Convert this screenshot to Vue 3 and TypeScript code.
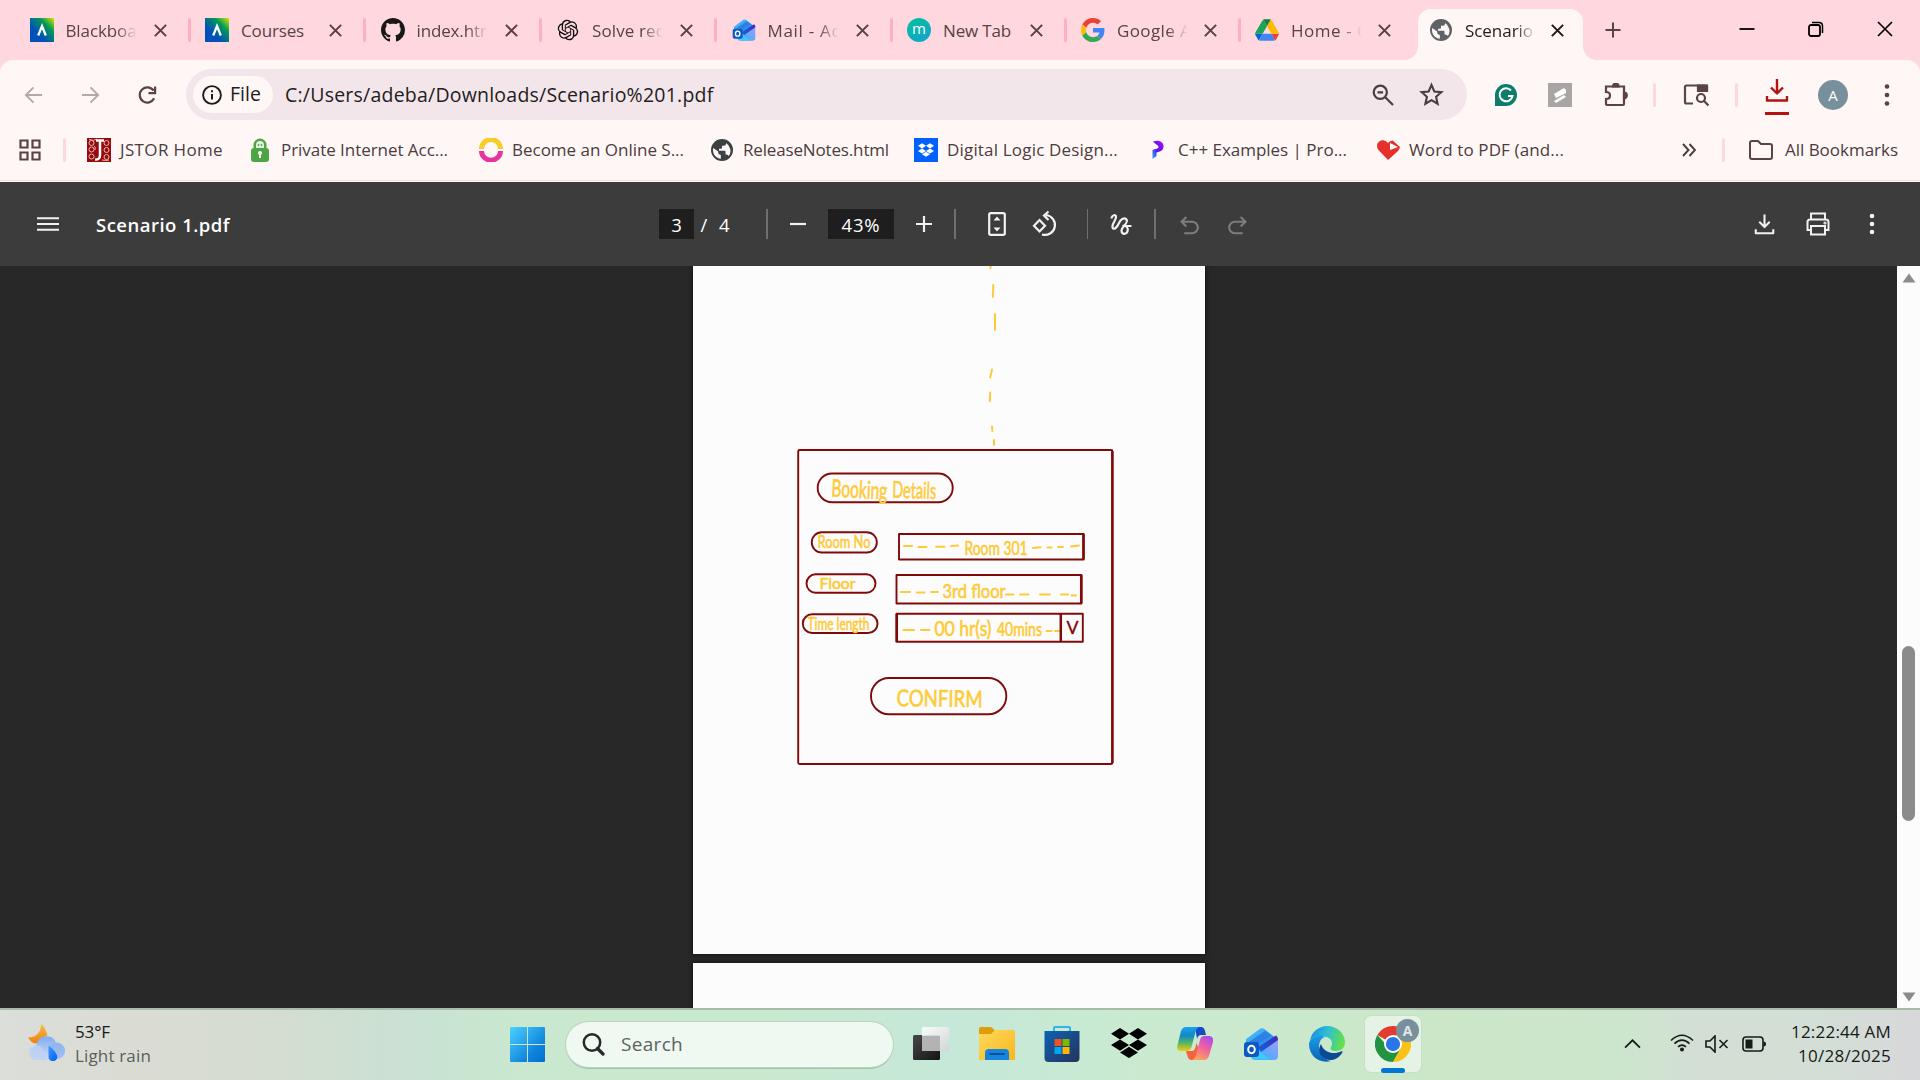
<script setup lang="ts">
import type { Directive } from 'vue'

interface Tab { title: string; icon: string; fit: number; width: number }
interface Bookmark { label: string; icon: string; fit: number; width: number }

// Spreads the letters of an element so that its line takes the given width.
const vFit: Directive<HTMLElement, number> = {
  mounted(el, binding) {
    const natural = el.getBoundingClientRect().width
    const count = (el.textContent ?? '').trim().length
    if (count > 0) el.style.letterSpacing = `${(binding.value - natural) / count}px`
  },
}

const tabs: Tab[] = [
  { title: 'Blackboa', icon: 'anthology', fit: 71, width: 175.5 },
  { title: 'Courses', icon: 'anthology', fit: 63, width: 175.5 },
  { title: 'index.htm', icon: 'github', fit: 79, width: 175.5 },
  { title: 'Solve rec', icon: 'openai', fit: 72, width: 175.5 },
  { title: 'Mail - Ad', icon: 'outlook', fit: 75, width: 175.5 },
  { title: 'New Tab', icon: 'm', fit: 68, width: 174 },
  { title: 'Google A', icon: 'google', fit: 74, width: 174 },
  { title: 'Home - G', icon: 'drive', fit: 79, width: 174.5 },
  { title: 'Scenario 1', icon: 'globe-grey', fit: 82, width: 174 },
]

const bookmarks: Bookmark[] = [
  { label: 'JSTOR Home', icon: 'jstor', fit: 103, width: 161 },
  { label: 'Private Internet Acc...', icon: 'pia', fit: 167, width: 231 },
  { label: 'Become an Online S...', icon: 'ring', fit: 172, width: 231 },
  { label: 'ReleaseNotes.html', icon: 'globe-dark', fit: 146, width: 204 },
  { label: 'Digital Logic Design...', icon: 'dropbox-blue', fit: 171, width: 231 },
  { label: 'C++ Examples | Pro...', icon: 'programiz', fit: 169, width: 231 },
  { label: 'Word to PDF (and...', icon: 'heart', fit: 155, width: 220 },
]

const apps = ['taskview', 'explorer', 'store', 'dropbox', 'copilot', 'outlook', 'edge']
</script>

<template>
  <svg class="sprite" width="0" height="0" aria-hidden="true">
    <defs>
      <linearGradient id="g-anth" x1="0" y1="1" x2="1" y2="0">
        <stop offset="0.35" stop-color="#0052b8" /><stop offset="0.7" stop-color="#009a55" /><stop offset="1" stop-color="#d8e600" />
      </linearGradient>
      <linearGradient id="g-win" x1="0" y1="0" x2="1" y2="1"><stop offset="0" stop-color="#4cd2ff" /><stop offset="0.7" stop-color="#0f83dc" /><stop offset="1" stop-color="#0070d0" /></linearGradient>
      <linearGradient id="g-m" x1="0" y1="0" x2="1" y2="1"><stop offset="0" stop-color="#08bf9a" /><stop offset="1" stop-color="#11a3d3" /></linearGradient>
      <linearGradient id="g-moon" x1="0" y1="0" x2="0" y2="1"><stop offset="0" stop-color="#f5bf3c" /><stop offset="1" stop-color="#ee7f1a" /></linearGradient>
      <linearGradient id="g-cloud" x1="0" y1="0" x2="0" y2="1"><stop offset="0" stop-color="#7fabee" /><stop offset="1" stop-color="#d3e0f7" /></linearGradient>
      <linearGradient id="g-drop" x1="0" y1="0" x2="1" y2="1"><stop offset="0" stop-color="#3f97ff" /><stop offset="1" stop-color="#0063f0" /></linearGradient>
      <linearGradient id="g-tv" x1="0" y1="0" x2="1" y2="1"><stop offset="0" stop-color="#484848" /><stop offset="1" stop-color="#141414" /></linearGradient>
      <linearGradient id="g-tw" x1="0" y1="0" x2="1" y2="1"><stop offset="0" stop-color="#fff" /><stop offset="1" stop-color="#d4d4d4" /></linearGradient>
      <linearGradient id="g-fold" x1="0" y1="0" x2="1" y2="1"><stop offset="0" stop-color="#ffd95e" /><stop offset="1" stop-color="#f7b71d" /></linearGradient>
      <linearGradient id="g-store" x1="0" y1="0" x2="1" y2="1"><stop offset="0" stop-color="#0b62b5" /><stop offset="1" stop-color="#27325a" /></linearGradient>
      <linearGradient id="g-cp1" x1="0" y1="0" x2="0" y2="1"><stop offset="0" stop-color="#15a5f0" /><stop offset="0.35" stop-color="#1487c8" /><stop offset="0.65" stop-color="#4fb568" /><stop offset="1" stop-color="#f2cc10" /></linearGradient>
      <linearGradient id="g-cp2" x1="0.8" y1="0" x2="0.3" y2="1"><stop offset="0" stop-color="#a64df0" /><stop offset="0.45" stop-color="#ee5fa0" /><stop offset="1" stop-color="#ffa45e" /></linearGradient>
      <linearGradient id="g-ol" x1="0" y1="0" x2="1" y2="1"><stop offset="0" stop-color="#54d0ff" /><stop offset="1" stop-color="#1668dc" /></linearGradient>
      <linearGradient id="g-ol2" x1="0" y1="1" x2="1" y2="0"><stop offset="0" stop-color="#20b4ff" /><stop offset="1" stop-color="#a89cf5" /></linearGradient>
      <linearGradient id="g-ol3" x1="0" y1="1" x2="1" y2="0"><stop offset="0" stop-color="#1267dd" /><stop offset="1" stop-color="#4327b7" /></linearGradient>
      <linearGradient id="g-ed1" x1="0" y1="0.4" x2="1" y2="0.6"><stop offset="0" stop-color="#1b8fe0" /><stop offset="0.45" stop-color="#2dbfd4" /><stop offset="1" stop-color="#6be23e" /></linearGradient>
      <linearGradient id="g-ed2" x1="0" y1="0" x2="0" y2="1"><stop offset="0" stop-color="#1a9be8" /><stop offset="1" stop-color="#0d63b5" /></linearGradient>
      <linearGradient id="g-prog" x1="0" y1="1" x2="1" y2="0"><stop offset="0" stop-color="#18b9ff" /><stop offset="0.45" stop-color="#5a10ef" /><stop offset="1" stop-color="#b010f5" /></linearGradient>
    </defs>

    <symbol id="anthology" viewBox="0 0 24 24"><rect width="24" height="24" fill="url(#g-anth)" /><path d="M8.2 17.5 12 8l3.8 9.500" fill="none" stroke="#fff" stroke-width="2.300" /></symbol>
    <symbol id="github" viewBox="0 0 16 16"><path fill="#191717" d="M8 0C3.58 0 0 3.58 0 8c0 3.54 2.29 6.53 5.47 7.59.4.07.55-.17.55-.38 0-.19-.01-.82-.01-1.49-2.01.37-2.53-.49-2.69-.94-.09-.23-.48-.94-.82-1.13-.28-.15-.68-.52-.01-.53.63-.01 1.08.58 1.23.82.72 1.21 1.87.87 2.33.66.07-.52.28-.87.51-1.07-1.78-.2-3.64-.89-3.64-3.95 0-.87.31-1.59.82-2.15-.08-.2-.36-1.02.08-2.12 0 0 .67-.21 2.2.82.64-.18 1.32-.27 2-.27s1.36.09 2 .27c1.53-1.04 2.2-.82 2.2-.82.44 1.1.16 1.92.08 2.12.51.56.82 1.27.82 2.15 0 3.07-1.87 3.75-3.65 3.95.29.25.54.73.54 1.48 0 1.07-.01 1.93-.01 2.2 0 .21.15.46.55.38A8.01 8.01 0 0 0 16 8c0-4.42-3.58-8-8-8z" /></symbol>
    <symbol id="openai" viewBox="-2 -2 28 28"><path fill="#111" d="M22.2819 9.8211a5.9847 5.9847 0 0 0-.5157-4.9108 6.0462 6.0462 0 0 0-6.5098-2.9A6.0651 6.0651 0 0 0 4.9807 4.1818a5.9847 5.9847 0 0 0-3.9977 2.9 6.0462 6.0462 0 0 0 .7427 7.0966 5.98 5.98 0 0 0 .511 4.9107 6.051 6.051 0 0 0 6.5146 2.9001A5.9847 5.9847 0 0 0 13.2599 24a6.0557 6.0557 0 0 0 5.7718-4.2058 5.9894 5.9894 0 0 0 3.9977-2.9001 6.0557 6.0557 0 0 0-.7475-7.0729zm-9.022 12.6081a4.4755 4.4755 0 0 1-2.8764-1.0408l.1419-.0804 4.7783-2.7582a.7948.7948 0 0 0 .3927-.6813v-6.7369l2.02 1.1686a.071.071 0 0 1 .038.052v5.5826a4.504 4.504 0 0 1-4.4945 4.4944zm-9.6607-4.1254a4.4708 4.4708 0 0 1-.5346-3.0137l.142.0852 4.783 2.7582a.7712.7712 0 0 0 .7806 0l5.8428-3.3685v2.3324a.0804.0804 0 0 1-.0332.0615L9.74 19.9502a4.4992 4.4992 0 0 1-6.1408-1.6464zM2.3408 7.8956a4.485 4.485 0 0 1 2.3655-1.9728V11.6a.7664.7664 0 0 0 .3879.6765l5.8144 3.3543-2.0201 1.1685a.0757.0757 0 0 1-.071 0l-4.8303-2.7865A4.504 4.504 0 0 1 2.3408 7.872zm16.5963 3.8558L13.1038 8.364 15.1192 7.2a.0757.0757 0 0 1 .071 0l4.8303 2.7913a4.4944 4.4944 0 0 1-.6765 8.1042v-5.6772a.79.79 0 0 0-.407-.667zm2.0107-3.0231l-.142-.0852-4.7735-2.7818a.7759.7759 0 0 0-.7854 0L9.409 9.2297V6.8974a.0662.0662 0 0 1 .0284-.0615l4.8303-2.7866a4.4992 4.4992 0 0 1 6.6802 4.66zM8.3065 12.863l-2.02-1.1638a.0804.0804 0 0 1-.038-.0567V6.0742a4.4992 4.4992 0 0 1 7.3757-3.4537l-.142.0805L8.704 5.459a.7948.7948 0 0 0-.3927.6813zm1.0976-2.3654l2.602-1.4998 2.6069 1.4998v2.9994l-2.5974 1.4997-2.6067-1.4997Z" /></symbol>
    <symbol id="outlook" viewBox="0 0 36 36">
      <path d="M3 13 16 3.500q3-2.500 6 0L34 13 20 24 3 22z" fill="url(#g-ol)" />
      <path d="M35 12v18q0 4-4 4H13q-4 0-5-3z" fill="url(#g-ol2)" />
      <path d="M6 16 22 5l6 4.500L12 20z" fill="#2e7fe6" />
      <path d="M14 22 33 9.500q2 1 2 4.500L18 26z" fill="url(#g-ol3)" />
      <path d="m15 24 12 9.500H13q-5-1-5-5z" fill="#3dc8ff" />
      <rect x="1" y="16" width="15" height="15" rx="3" fill="#0d5ac4" />
      <ellipse cx="8.500" cy="23.500" rx="3.300" ry="3.800" fill="none" stroke="#fff" stroke-width="2" />
    </symbol>
    <symbol id="google" viewBox="0 0 48 48">
      <path fill="#EA4335" d="M24 9.500c3.540 0 6.710 1.220 9.210 3.600l6.850-6.850C35.900 2.380 30.470 0 24 0 14.620 0 6.510 5.380 2.560 13.220l7.980 6.190C12.430 13.720 17.740 9.500 24 9.500z" />
      <path fill="#4285F4" d="M46.980 24.550c0-1.570-.150-3.090-.380-4.550H24v9.020h12.940c-.580 2.960-2.260 5.480-4.780 7.180l7.730 6c4.510-4.180 7.090-10.360 7.090-17.650z" />
      <path fill="#FBBC05" d="M10.530 28.590c-.480-1.450-.760-2.990-.760-4.590s.270-3.140.760-4.590l-7.980-6.190C.920 16.460 0 20.120 0 24c0 3.880.920 7.540 2.560 10.780l7.970-6.190z" />
      <path fill="#34A853" d="M24 48c6.480 0 11.930-2.130 15.890-5.810l-7.730-6c-2.150 1.450-4.920 2.300-8.160 2.300-6.260 0-11.570-4.220-13.470-9.910l-7.980 6.190C6.510 42.620 14.620 48 24 48z" />
    </symbol>
    <symbol id="drive" viewBox="0 -5 87.300 88">
      <path d="m6.600 66.850 3.850 6.650c.8 1.400 1.950 2.500 3.300 3.300l13.750-23.800h-27.500c0 1.550.4 3.100 1.200 4.500z" fill="#0066da" />
      <path d="m43.650 25-13.750-23.800c-1.350.8-2.500 1.900-3.300 3.300l-25.400 44a9.060 9.060 0 0 0-1.200 4.500h27.500z" fill="#1ea45a" />
      <path d="m73.550 76.800c1.350-.8 2.500-1.900 3.300-3.300l1.600-2.750 7.650-13.250c.8-1.400 1.200-2.950 1.200-4.500h-27.500l5.850 11.500z" fill="#ea4335" />
      <path d="m43.650 25 13.750-23.800c-1.350-.8-2.900-1.200-4.500-1.200h-18.500c-1.600 0-3.150.450-4.500 1.200z" fill="#188038" />
      <path d="m59.800 53h-32.300l-13.750 23.800c1.350.8 2.900 1.200 4.500 1.200h50.800c1.600 0 3.150-.450 4.500-1.200z" fill="#4285f4" />
      <path d="m73.400 26.500-12.700-22c-.8-1.400-1.950-2.500-3.300-3.300l-13.750 23.800 16.150 28h27.450c0-1.550-.4-3.100-1.200-4.500z" fill="#ffba00" />
    </symbol>
    <symbol id="globe" viewBox="0 0 24 24"><path fill="currentColor" d="M12 1A11 11 0 1 0 12 23A11 11 0 1 0 12 1zM10.800 20.800C6.300 20.300 3 16.500 3 12c0-.7.1-1.300.2-2l5 3.500v1q0 1.800 1.800 2.200h.8zM18.800 18q-.6-1.500-2.300-1.500h-1v-2.800q0-1-1-1H9v-2h2q1 0 1-1v-2h2q2 0 2-2v-.7A9 9 0 0 1 18.800 18z" /></symbol>
    <symbol id="globe-grey" viewBox="0 0 24 24"><use href="#globe" color="#5f6368" width="24" height="24" /></symbol>
    <symbol id="globe-dark" viewBox="0 0 24 24"><use href="#globe" color="#3c4043" width="24" height="24" /></symbol>
    <symbol id="jstor" viewBox="0 0 24 24">
      <rect width="24" height="24" fill="#970a0b" />
      <g fill="none" stroke="#e3b9b5" stroke-width="1"><circle cx="4.500" cy="5" r="2.500" /><circle cx="4.500" cy="11.500" r="2.500" /><circle cx="4.500" cy="18.500" r="2.500" /><circle cx="19.500" cy="5" r="2.500" /><circle cx="19.500" cy="12" r="2.500" /><circle cx="19.500" cy="19" r="2.500" /><path d="M2 1.500q5 2 8-.5M15 22q4 1 7 0M7 8q2 1 1 4" /></g>
      <path d="M9 2.500h8M13 3v14q0 5-5 4.500" fill="none" stroke="#fff" stroke-width="2.500" />
    </symbol>
    <symbol id="pia" viewBox="0 0 24 24">
      <path d="M5.500 12V7a6.500 6.500 0 0 1 13 0v5" fill="#4da644" /><rect x="3" y="10" width="18" height="14" rx="3" fill="#4da644" />
      <path d="M8 10V7a4 4 0 0 1 8 0v3z" fill="#e4f3e0" /><circle cx="10.500" cy="7" r=".9" fill="#4da644" /><circle cx="13.500" cy="7" r=".9" fill="#4da644" /><circle cx="12" cy="15" r="2" fill="#fff" /><path d="M11 15h2v5h-2z" fill="#fff" />
    </symbol>
    <symbol id="ring" viewBox="0 0 24 24"><path d="M2.500 11a9.500 9.500 0 0 1 19 0" fill="none" stroke="#f9cc28" stroke-width="5" /><path d="M2.500 13a9.500 9.200 0 0 0 19 0" fill="none" stroke="#e6339d" stroke-width="5" /></symbol>
    <symbol id="boxes" viewBox="0 0 36 30"><path fill="currentColor" d="m9 0 9 5.700-9 5.700-9-5.700zM27 0l9 5.700-9 5.700-9-5.700zM9 11.400l9 5.700-9 5.700-9-5.700zM27 11.400l9 5.700-9 5.700-9-5.700zM18 18.700l9 5.700-9 5.700-9-5.700z" /></symbol>
    <symbol id="dropbox-blue" viewBox="0 0 24 24"><rect width="24" height="24" fill="#0061fe" /><use href="#boxes" color="#fff" x="4" y="5" width="16" height="14" /></symbol>
    <symbol id="dropbox" viewBox="0 0 36 36"><use href="#boxes" color="#000" x="0" y="2" width="36" height="30" /></symbol>
    <symbol id="programiz" viewBox="0 0 24 24"><path d="M8 3.500c6-2 11 .5 10.500 5.500-.5 4-4 4.500-7 5.500v3.500l-4 3V12c3-1.500 6-1 6-3S10.500 6.500 8 3.500z" fill="url(#g-prog)" /></symbol>
    <symbol id="heart" viewBox="0 0 24 24"><path d="M12 22 2.500 12C-2 6 5-1 11 4l1 1q2-2.500 4.500-2.500L24 9q-.5 2-2 4z" fill="#e8302a" /><path d="m14 5 8 4-8 3z" fill="#fff" /><path d="m16 3 7 6" stroke="#c92a25" stroke-width=".8" /></symbol>

    <symbol id="taskview" viewBox="0 0 36 36"><rect y="9" width="27" height="25" rx="1.500" fill="url(#g-tv)" /><rect x="9" y="1" width="27" height="24" rx="1.500" fill="url(#g-tw)" opacity=".88" /><path d="M9 10h18v15H9z" fill="#b3b3b3" /></symbol>
    <symbol id="explorer" viewBox="0 0 36 36"><path d="M0 11V3q0-2 2-2h9q2 0 3.500 2l1.500 2v6z" fill="#df9d09" /><path d="M0 8h12l4-4h18q2 0 2 2v28H0z" fill="url(#g-fold)" /><path d="M6 34V27q0-4 4-4h16q4 0 4 4v7z" fill="#1684dc" /><path d="M11 28h14" stroke="#075399" stroke-width="2" stroke-linecap="round" /></symbol>
    <symbol id="store" viewBox="0 0 36 36"><path d="M10 7V2q0-1 1-1h14q1 0 1 1v5" fill="none" stroke="#29b7ee" stroke-width="2" /><path d="M.5 5h35v27q0 4-4 4h-27q-4 0-4-4z" fill="url(#g-store)" /><path d="M10.500 13h7v7h-7z" fill="#f25022" /><path d="M18.500 13h7v7h-7z" fill="#7fba00" /><path d="M10.500 21h7v7h-7z" fill="#00a4ef" /><path d="M18.500 21h7v7h-7z" fill="#ffb900" /></symbol>
    <symbol id="copilot" viewBox="0 0 36 36">
      <path d="M18 1h6q3 0 4 4l1 4h-5q-3 0-4 4z" fill="#174ac4" />
      <path d="M9 1h13q-2.500 1-3.500 5l-4 15q-1.500 4-5 4H4q-5 0-3.500-6L4 5q1.500-4 5-4z" fill="url(#g-cp1)" />
      <path d="M9 25h6q2.500 0 3.500-4l1-4 4 10q-2 6-5 7h-4q-3 0-4-4z" fill="#f5633f" />
      <path d="M27 10h6q4 1 3 6l-4 14q-1.500 4-5 4H15q3-1 4-5l4-15q1-4 4-4z" fill="url(#g-cp2)" />
    </symbol>
    <symbol id="edge" viewBox="0 0 36 36">
      <path d="M1 15A17.500 17.500 0 0 1 18 0c11 0 18 8 18 16 0 6-4 9-9 9-6 0-6-3-4.500-5 1.500-3 0-8-5.500-9C10 9 3 10 1 15z" fill="url(#g-ed1)" />
      <path d="M0 18C1 11 9 8 16 11c-4 1-6 5-6 10 0 8 6 13 12 14C10 38 0 30 0 18z" fill="url(#g-ed2)" />
      <path d="M12 18c-6 10 4 17 11 16 6-1 9-5 10.500-8 .3-1-.5-1-1-.7-8 4-18 1-20.500-7.300z" fill="#0c4a94" />
    </symbol>
    <symbol id="chrome" viewBox="0 0 48 48">
      <path d="M24 24 3.200 12A24 24 0 0 1 44.800 12z" fill="#e33b2e" /><path d="M24 24h-10L3.200 12a24 24 0 0 0 20.800 36L34.400 30z" fill="#229342" /><path d="M24 12h20.800A24 24 0 0 1 24 48l10.400-18z" fill="#fbc116" />
      <circle cx="24" cy="24" r="12" fill="#fff" /><circle cx="24" cy="24" r="9.500" fill="#2a76e8" />
    </symbol>
    <symbol id="x" viewBox="0 0 16 16"><path d="m2 2 12 12M14 2 2 14" fill="none" stroke="currentColor" stroke-width="2.200" /></symbol>
    <symbol id="down" viewBox="0 0 24 24"><path d="M12 1v14M6 9.500l6 6 6-6M2 18v4.500h20V18" fill="none" stroke="currentColor" stroke-width="2.400" stroke-linejoin="round" /></symbol>
    <symbol id="undo" viewBox="0 0 18 18"><path d="M6 1 1.500 5.500 6 10M2 5.500h9.500a5.300 5.300 0 0 1 0 10.800H4" fill="none" stroke="currentColor" stroke-width="2" /></symbol>
  </svg>

  <div class="screen">
    <header class="tabs">
      <div v-for="(t, i) in tabs" :key="i" class="tab" :class="{ active: i === 8, divided: i > 0 && i < 8 }" :style="{ width: t.width + 'px' }">
        <div v-if="t.icon === 'm'" class="i24 m-icon">m</div>
        <svg v-else class="i24"><use :href="'#' + t.icon" /></svg>
        <div class="tab-title"><span v-fit="t.fit">{{ t.title }}</span></div>
        <svg class="tab-x"><use href="#x" /></svg>
      </div>
      <svg class="plus" viewBox="0 0 16 16"><path d="M8 .5v15M.5 8h15" stroke="currentColor" stroke-width="2" /></svg>
      <div class="window-buttons">
        <svg viewBox="0 0 16 16"><path d="M.5 8h15" stroke="#000" stroke-width="1.800" /></svg>
        <svg viewBox="0 0 16 16"><rect x="1" y="4" width="11" height="11" rx="2" fill="none" stroke="#000" stroke-width="1.800" /><path d="M4 1.500h7q3.500 0 3.500 3.500v7" fill="none" stroke="#000" stroke-width="1.500" /></svg>
        <svg viewBox="0 0 16 16"><path d="m1 1 14 14M15 1 1 15" stroke="#000" stroke-width="1.700" /></svg>
      </div>
    </header>

    <section class="chrome-bar">
      <div class="toolbar">
        <svg class="nav faded" viewBox="0 0 20 20"><path d="M19 10H2M10 2 2 10l8 8" /></svg>
        <svg class="nav faded" viewBox="0 0 20 20"><path d="M1 10h17M10 2l8 8-8 8" /></svg>
        <svg class="nav" viewBox="0 0 20 20"><path d="M17 13.500A8 8 0 1 1 16.500 5.500M18 1v7h-7" stroke-width="2.300" /></svg>
        <div class="omnibox">
          <div class="chip">
            <svg viewBox="0 0 20 20"><circle cx="10" cy="10" r="8.900" fill="none" stroke="#1f1a1b" stroke-width="1.900" /><path d="M10 9v5.500M10 5.300v2" stroke="#1f1a1b" stroke-width="2" /></svg>
            <span v-fit="31">File</span>
          </div>
          <div class="url"><span v-fit="428.5">C:/Users/adeba/Downloads/Scenario%201.pdf</span></div>
          <svg class="zoom-ic" viewBox="0 0 22 22"><circle cx="8.300" cy="8.300" r="6.600" /><path d="m13 13 8 8M5.500 8.300h5.600" /></svg>
          <svg class="star" viewBox="0 0 24 24"><path d="m12 2.800 2.700 6.300 6.800.6-5.100 4.500 1.500 6.700-5.900-3.500-5.900 3.500 1.500-6.700-5.100-4.500 6.800-.6z" /></svg>
        </div>
        <div class="actions">
          <svg class="i24" viewBox="0 0 24 24"><path d="M1 23V12A11 11 0 1 1 12 23z" fill="#0b7d69" /><path d="M17 7.500A6.500 6.500 0 1 0 18.500 13H14" fill="none" stroke="#fff" stroke-width="2" /></svg>
          <svg class="i24" viewBox="0 0 24 24"><rect width="24" height="24" fill="#a9a5a4" /><path d="m6 11 10-6 2 2v3L8 15zM6 18l10-6 2 2-10 6z" fill="#fff" /></svg>
          <svg class="i24 line" viewBox="0 0 24 24"><path d="M2 3.500h18v17.500q0 1-1 1H3q-1 0-1-1v-5q4 0 4-3.500T2 9z" /><path d="M9 3.500a2.800 2.800 0 0 1 5.600 0zM20 9.500a2.800 3 0 0 1 0 6z" fill="currentColor" /></svg>
          <i class="sep" />
          <svg class="search-tab line" viewBox="0 0 26 24"><path d="M10 21H3.500q-1.500 0-1.500-1.500v-15Q2 3 3.500 3h19Q24 3 24 4.500V8" /><path d="M15 3h9v5.500h-9z" fill="currentColor" /><circle cx="18" cy="15.500" r="4" /><path d="m21 18.500 4.500 4.500" /></svg>
          <i class="sep" />
          <div class="dl"><svg class="i24"><use href="#down" /></svg></div>
          <div class="avatar">A</div>
          <svg class="dots" viewBox="0 0 6 22"><circle cx="3" cy="2.500" r="2.300" /><circle cx="3" cy="11" r="2.300" /><circle cx="3" cy="19.500" r="2.300" /></svg>
        </div>
      </div>

      <nav class="bookmarks">
        <svg class="apps" viewBox="0 0 22 22"><path d="M1.500 1.500h7v7h-7zM13.500 1.500h7v7h-7zM1.500 13.500h7v7h-7zM13.500 13.500h7v7h-7z" fill="none" stroke="#5a4246" stroke-width="2.200" /></svg>
        <i class="sep" />
        <div class="bm-list">
          <div v-for="b in bookmarks" :key="b.label" class="bm" :style="{ width: b.width + 'px' }">
            <svg class="i24"><use :href="'#' + b.icon" /></svg>
            <span v-fit="b.fit">{{ b.label }}</span>
          </div>
        </div>
        <svg class="more" viewBox="0 0 14 14"><path d="m1 1 5.500 6L1 13M7.500 1 13 7l-5.500 6" fill="none" stroke="#4a3a3d" stroke-width="1.900" /></svg>
        <i class="sep" />
        <svg class="i24 line folder" viewBox="0 0 24 24"><path d="M1 19V5q0-2 2-2h6l3 3h9q2 0 2 2v11q0 2-2 2H3q-2 0-2-2z" /></svg>
        <span v-fit="113">All Bookmarks</span>
      </nav>
    </section>

    <section class="pdf-bar">
      <svg class="menu" viewBox="0 0 22 14"><path d="M0 1.200h22M0 7h22M0 12.800h22" stroke="#f1f1f1" stroke-width="2" /></svg>
      <div class="pdf-title"><span v-fit="134">Scenario 1.pdf</span></div>
      <div class="pdf-tools">
        <b class="field page-no">3</b><span class="slash">/</span><span class="total">4</span>
        <i class="rule r1" />
        <svg class="t16" viewBox="0 0 16 16"><path d="M0 8h16" /></svg>
        <b class="field percent"><span v-fit="39">43%</span></b>
        <svg class="t16" viewBox="0 0 16 16"><path d="M0 8h16M8 0v16" /></svg>
        <i class="rule r2" />
        <svg class="fitpage" viewBox="0 0 18 24"><rect x="1.200" y="1.200" width="15.600" height="21.600" rx="1.500" /><path d="m9 4.500 3.500 4h-7zM9 19.500l3.500-4h-7z" class="solid" /></svg>
        <svg class="rotate" viewBox="0 0 26 26"><path d="m7.500 9 5.500 5.700-5.500 5.700L2 14.700zM10 23.500a10 10 0 1 0 4-19.500M16.500.5 12 4.500l4.500 4.500" /></svg>
        <i class="rule r3" />
        <svg class="draw" viewBox="0 0 22 22"><path d="M1.300 5C2 1.500 6 .5 6 3.500 6 7 1.500 10.500 2.500 14c1.500 3.500 5-1 6.500-4.500C10.500 6 14 3.500 16.500 6c2.500 3.500-4.500 6.500-5 11 0 4 4.500 4.500 6 1 1.200-3.500-1.500-7-5-5.500M15.500 12.500h6" /></svg>
        <i class="rule r4" />
        <svg class="undo"><use href="#undo" /></svg>
        <svg class="undo redo"><use href="#undo" /></svg>
      </div>
      <div class="pdf-right">
        <svg class="p-down"><use href="#down" /></svg>
        <svg class="p-print" viewBox="0 0 24 24"><path d="M5 7V1.500h14V7M5 18H1.500v-8q0-2.500 2.500-2.500h16q2.500 0 2.500 2.500v8H19M5 14h14v8.500H5z" /><circle cx="19" cy="11" r=".6" /></svg>
        <svg class="p-dots" viewBox="0 0 6 22"><circle cx="3" cy="3" r="2.300" /><circle cx="3" cy="11" r="2.300" /><circle cx="3" cy="19" r="2.300" /></svg>
      </div>
    </section>

    <main class="viewer">
      <div class="pages">
        <div class="page">
          <svg class="sketch" viewBox="693 266 512 688">
            <g class="gold">
              <path d="M990.500 266v2M993.300 285l-.5 12M995 314v16M992 369.500l-1.800 8M990.200 392.500l-.3 8.500M992 426.500l.4 4.500M994 440v5" />
              <path d="M904 546h8M918.500 547h8M936 546.800h8.500M951 546l7-.5M1033 548l7.500-.7M1047.500 547.500h4M1058 547h5M1071 546.500l8-1" />
              <path d="M901 592h9M917 592.500h7.500M931 592h7M1006 594.500h7.500M1020 594.500h8.500M1040 594.500h10M1061 594.500h7M1071.500 595.500h4.500" />
              <path d="M903.500 630h10.500M921 630h8.500M1046.500 631h5M1055 631h5" />
            </g>
            <g class="red">
              <rect x="798.200" y="450" width="314.300" height="314" rx="1.500" /><path d="M1112.300 451v312" stroke-width="2.400" />
              <rect x="817.700" y="473.500" width="135" height="28.700" rx="14.300" />
              <rect x="811.800" y="532.200" width="65" height="20.300" rx="10" /><rect x="806.500" y="574.300" width="69" height="18.500" rx="9.200" /><rect x="802.800" y="614.300" width="74.700" height="18.700" rx="9.300" />
              <rect x="899" y="534" width="184.700" height="25.500" /><path d="M1083.400 534v25" stroke-width="2.500" />
              <rect x="896.500" y="575" width="185" height="28.500" /><path d="M1081.200 575v28" stroke-width="2.500" />
              <rect x="896.500" y="613.800" width="186.300" height="28" /><path d="M896.800 614v28M1060.800 614v28" stroke-width="2.500" />
              <rect x="871" y="678" width="135.300" height="36.300" rx="18" />
            </g>
            <g class="hand">
              <text x="831" y="496.500" font-size="24" textLength="56" lengthAdjust="spacingAndGlyphs" transform="rotate(3 831 497)">Booking</text>
              <text x="892" y="497.500" font-size="23" textLength="44" lengthAdjust="spacingAndGlyphs" transform="rotate(2 892 497)">Details</text>
              <text x="817.500" y="548" font-size="17.500" textLength="53" lengthAdjust="spacingAndGlyphs">Room No</text>
              <text x="964.500" y="555" font-size="19" textLength="63" lengthAdjust="spacingAndGlyphs">Room 301</text>
              <text x="819.500" y="589" font-size="16" textLength="36" lengthAdjust="spacingAndGlyphs">Floor</text>
              <text x="942.500" y="597.500" font-size="20" textLength="63" lengthAdjust="spacingAndGlyphs">3rd floor</text>
              <text x="807.500" y="630" font-size="18" textLength="62" lengthAdjust="spacingAndGlyphs">Time length</text>
              <text x="934.500" y="635.500" font-size="20.500" textLength="57" lengthAdjust="spacingAndGlyphs">00 hr(s)</text>
              <text x="997" y="635.800" font-size="18.500" textLength="45" lengthAdjust="spacingAndGlyphs">40mins</text>
              <text x="896.500" y="706" font-size="23" textLength="86" lengthAdjust="spacingAndGlyphs" transform="rotate(.8 897 706)">CONFIRM</text>
              <text class="vee" x="1066.500" y="633.500" font-size="16.500" textLength="12" lengthAdjust="spacingAndGlyphs">V</text>
            </g>
          </svg>
        </div>
        <div class="page next" />
      </div>
      <div class="scrollbar">
        <svg viewBox="0 0 16 12"><path d="M8 1.500 14.500 10.500h-13z" /></svg>
        <div class="thumb" />
        <svg viewBox="0 0 16 12"><path d="M8 10.500 14.500 1.500h-13z" /></svg>
      </div>
    </main>

    <footer class="taskbar">
      <div class="weather">
        <svg viewBox="0 0 36 36"><path d="M13 0q3 2 6 11-6 2-7 6-5 4-9 0-2-2-3-4Q12 13 13 0z" fill="url(#g-moon)" /><path d="M8 35a8 7.500 0 0 1 0-14Q10 12 18 12q7 0 9 6 9 1 9 8.500T28 35z" fill="url(#g-cloud)" /><circle cx="28" cy="26" r="8" fill="#8fb1ee" opacity=".7" /><path d="M1 28a7 6 0 0 1 13-4q5 4 5 11H8q-7 0-7-7z" fill="#bed2f5" opacity=".8" /><path d="M20 21q9 7 8.500 12-1 3-4.300 3T20 33z" fill="url(#g-drop)" /></svg>
        <div class="lines"><span v-fit="35">53°F</span><span v-fit="76">Light rain</span></div>
      </div>
      <svg class="start" viewBox="0 0 35 35"><path d="M1 0h16v17H0V1q0-1 1-1zM18 0h16q1 0 1 1v16H18zM0 18h17v17H1q-1 0-1-1zM18 18h17v16q0 1-1 1H18z" fill="url(#g-win)" /></svg>
      <div class="search">
        <svg viewBox="0 0 23 23"><circle cx="10" cy="9.500" r="8.200" fill="none" stroke="#262a28" stroke-width="2.500" /><path d="m15.500 15.500 5.500 5.500" stroke="#262a28" stroke-width="3.200" stroke-linecap="round" /></svg>
        <span v-fit="62">Search</span>
      </div>
      <div class="pinned"><svg v-for="a in apps" :key="a"><use :href="'#' + a" /></svg></div>
      <div class="tile">
        <svg><use href="#chrome" /></svg>
        <div class="badge">A</div>
        <div class="mark" />
      </div>
      <div class="tray">
        <svg class="caret" viewBox="0 0 16 9"><path d="m1 8 7-7 7 7" /></svg>
        <svg class="wifi" viewBox="0 0 24 18"><path d="M1 6.500Q12-4 23 6.500M4.500 9.700q7.500-7 15 0M8 12.800q4-3.500 8 0" /><circle cx="12" cy="15.500" r="2" fill="#161a18" stroke="none" /></svg>
        <svg class="vol" viewBox="0 0 24 18"><path d="M1 6h4l5-5v16l-5-5H1zM14.500 5l8 8M22.500 5l-8 8" /></svg>
        <svg class="batt" viewBox="0 0 24 16"><rect x="1" y="1" width="20" height="14" rx="3" /><path d="M3.500 3.500h7v9h-7zM21.500 5.500q2.500 0 2.500 2.500t-2.500 2.500z" fill="#161a18" stroke="none" /></svg>
        <div class="lines clock"><span v-fit="100">12:22:44 AM</span><span v-fit="93">10/28/2025</span></div>
      </div>
    </footer>
  </div>
</template>

<style>
body { margin: 0; overflow: hidden; }
</style>

<style scoped>
.sprite { position: absolute; }
.screen { width: 1920px; height: 1080px; display: flex; flex-direction: column; overflow: hidden; font-family: "Open Sans", "Noto Sans", sans-serif; font-size: 17px; line-height: 24px; color: #4b3c3f; background: #ffd8df; }
.screen svg { display: block; flex: none; }
span { white-space: nowrap; }
.i24 { width: 24px; height: 24px; flex: none; }
.sep { width: 3px; height: 24px; background: #ffd8df; border-radius: 1.500px; flex: none; }
.line { fill: none; stroke: #5a4246; stroke-width: 2.200; color: #5a4246; }

.tabs { height: 60px; display: flex; padding-left: 14px; color: #5a4146; flex: none; }
.tab { box-sizing: border-box; height: 42px; margin-top: 9px; padding-left: 15.500px; display: flex; align-items: center; position: relative; flex: none; }
.tab.divided::before { content: ''; position: absolute; left: -2px; top: 9px; width: 3px; height: 24px; border-radius: 2px; background: #ffb0bf; }
.m-icon { border-radius: 50%; background: linear-gradient(150deg, #08bf9a, #11a3d3); color: #fff; font-size: 15px; line-height: 21px; text-align: center; }
.tab-title { width: 70px; margin-left: 12px; overflow: hidden; mask-image: linear-gradient(90deg, #000 50px, transparent 71px); position: relative; top: 1px; }
.tab:nth-child(2) .tab-title, .tab:nth-child(6) .tab-title { mask-image: none; }
.tab-x { width: 15px; height: 15px; margin-left: 17px; }
.tab:nth-child(n + 6) .tab-x { margin-left: 16px; }
.tab.active .tab-x { margin-left: 15px; }
.tab.active { color: #24191b; }
.tab.active::before { content: ''; position: absolute; left: 4px; right: 5px; top: 0; height: 51px; border-radius: 13px 13px 0 0; background: #fff7f5; }
.tab.active::after { content: ''; position: absolute; left: -9px; right: -8px; bottom: -9px; height: 13px; background: radial-gradient(circle at 0 0, transparent 12.500px, #fff7f5 13px) left / 13px 13px no-repeat, radial-gradient(circle at 100% 0, transparent 12.500px, #fff7f5 13px) right / 13px 13px no-repeat; }
.tab.active > * { z-index: 1; }
.tab.active > .i24 { margin-left: -.500px; }
.plus { width: 16px; height: 16px; margin: 22px 0 0 16.500px; }
.window-buttons { display: flex; gap: 53px; margin: 21px 0 0 118.500px; }
.window-buttons svg { width: 16px; height: 16px; }

.chrome-bar { height: 120px; border-bottom: 1px solid #ffd8df; background: #fff7f5; border-radius: 13px 13px 0 0; flex: none; }
.toolbar { height: 51px; padding: 9px 0 0 24px; display: flex; align-items: center; }
.nav { width: 19px; height: 20px; margin-right: 38px; fill: none; stroke: #5a4146; stroke-width: 2; }
.nav.faded { stroke: #b3a9a9; }
.nav:nth-child(3) { margin: 0 29px 0 1px; }
.nav:nth-child(2) { margin-right: 37px; }
.omnibox { box-sizing: border-box; width: 1281px; height: 51px; border-radius: 26px; background: #f2e6ea; padding-left: 7px; display: flex; align-items: center; font-size: 19.500px; color: #241c1e; }
.chip { box-sizing: border-box; width: 80px; height: 37px; border-radius: 19px; background: #fff7f5; padding-left: 9px; display: flex; align-items: center; gap: 8px; }
.chip svg { width: 20px; height: 20px; }
.chip span { position: relative; top: -.500px; }
.url { margin-left: 12px; width: 429px; white-space: nowrap; }
.zoom-ic { width: 22px; height: 22px; margin-left: 658px; fill: none; stroke: #4a3d40; stroke-width: 2.200; }
.star { width: 25px; height: 25px; margin-left: 25px; fill: none; stroke: #4a3d40; stroke-width: 2; }
.actions { display: flex; align-items: center; }
.actions > :nth-child(1) { margin-left: 27px; }
.actions > :nth-child(2) { margin-left: 30px; }
.actions > :nth-child(3) { margin-left: 32px; }
.actions > :nth-child(4) { margin-left: 25px; }
.search-tab { width: 26px; height: 25px; margin-left: 27px; }
.actions > :nth-child(6) { margin-left: 26px; }
.dl { margin-left: 27px; width: 24px; height: 32px; color: #b3120f; border-bottom: 3px solid #b3120f; padding-top: 5px; }
.dl svg { margin-top: -2px; }
.avatar { width: 30px; height: 30px; line-height: 30px; margin-left: 29px; border-radius: 50%; background: #78909c; color: #fff; text-align: center; font-size: 15px; }
.dots { width: 6px; height: 22px; margin-left: 36px; fill: #5a4146; }

.bookmarks { height: 60px; display: flex; align-items: center; padding-left: 19px; }
.bookmarks span { position: relative; top: -.500px; }
.apps { width: 22px; height: 22px; }
.bookmarks > .sep:nth-child(2) { margin-left: 22px; }
.bm-list { display: flex; margin-left: 21px; width: 1595px; }
.bm { display: flex; align-items: center; gap: 9px; flex: none; }
.more { width: 14px; height: 14px; }
.bookmarks > .sep:nth-child(5) { margin-left: 26px; }
.folder { margin: 0 12px 0 24px; stroke-width: 2; }

.pdf-bar { height: 84px; border-top: 1px solid #fff; background: #3c3c3c; color: #fff; display: flex; align-items: center; font-size: 18.500px; flex: none; }
.menu { width: 22px; height: 14px; margin-left: 37px; }
.pdf-title { font-weight: 600; font-size: 18.500px; width: 134px; margin-left: 37px; padding-top: 2px; white-space: nowrap; }
.pdf-tools { display: flex; align-items: center; margin-left: 429px; fill: none; stroke: #f1f1f1; stroke-width: 2.200; }
.field { background: #1e1e1e; height: 30px; line-height: 31px; font-weight: 400; text-align: center; }
.page-no { width: 35px; }
.slash { margin-left: 6px; width: 8px; text-align: center; padding-top: 2px; }
.total { margin-left: 11px; width: 11px; padding-top: 2px; }
.rule { width: 1.500px; height: 30px; background: #6f6f6f; flex: none; }
.r1 { margin: 0 22px 0 36px; width: 2px; }
.t16 { width: 16px; height: 16px; }
.percent { width: 66px; margin: 0 22px; }
.r2 { margin: 0 32px 0 22px; }
.fitpage { width: 18px; height: 24px; }
.rotate { width: 26px; height: 30px; margin-left: 26px; }
.solid { fill: #f1f1f1; stroke: none; }
.r3 { margin: 0 22px 0 29px; }
.draw { width: 22px; height: 23px; }
.r4 { margin: 0 24px 0 22px; }
.undo { width: 19px; height: 19px; color: #7d7d7d; margin-top: 2px; }
.redo { margin-left: 29px; transform: scaleX(-1); }
.pdf-right { display: flex; align-items: center; margin-left: auto; margin-right: 45px; fill: none; stroke: #f1f1f1; stroke-width: 2; }
.p-down { width: 21px; height: 22px; color: #f1f1f1; margin-right: 31px; }
.p-print { width: 24px; height: 24px; margin-right: 39px; }
.p-dots { width: 6px; height: 22px; fill: #f1f1f1; stroke: none; }

.viewer { height: 742px; display: flex; background: #282828; overflow: hidden; flex: none; }
.pages { width: 512px; padding: 0 692px 0 693px; }
.page { height: 688px; background: #fcfcfc; box-shadow: 0 0 4px 1px #151515; }
.page.next { height: 60px; margin-top: 9px; }
.sketch { width: 512px; height: 688px; }
.gold { fill: none; stroke: #ffca38; stroke-width: 2; stroke-linecap: round; }
.red { fill: none; stroke: #800a0a; stroke-width: 1.900; stroke-linejoin: round; }
.hand { fill: #ffca38; stroke: #ffca38; stroke-width: .6; stroke-linejoin: round; font-family: Lato, "Open Sans", sans-serif; }
.hand .vee { fill: #800a0a; stroke: #800a0a; stroke-width: .3; }
.scrollbar { width: 23px; background: #fcfcfc; display: flex; flex-direction: column; align-items: center; fill: #8b8b8b; }
.scrollbar svg { width: 16px; height: 14px; margin-top: 5px; }
.thumb { width: 13px; height: 175px; margin: 361px 0 164px; border-radius: 7px; background: #8b8b8b; flex: none; }

.taskbar { height: 70px; border-top: 2px solid #a9bba9; background: linear-gradient(90deg, #dbded9 0, #dadcd3 150px, #d5dcd1 270px, #c9e2d3 420px, #c9e8cf 520px, #c9e9ce 750px, #c5e8d8 950px, #caead0 1150px, #cbe7c8 1450px, #cce6cd 1620px, #d3dfd4 1690px, #d3ded6 1830px, #d8d8da 1920px); display: flex; color: #161a18; flex: none; }
.lines { display: flex; flex-direction: column; }
.weather .lines span:last-child { color: #5b5f5b; }
.weather { display: flex; width: 481px; padding: 10px 0 0 29px; font-size: 17px; }
.weather svg { width: 37px; height: 37px; margin: 4px 0 0 -1px; }
.weather .lines { margin-left: 10px; align-items: flex-start; }
.start { width: 35px; height: 35px; margin-top: 17px; }
.search { box-sizing: border-box; width: 327px; height: 45px; margin: 12px 0 0 21px; border-radius: 23px; background: #eff8f1; box-shadow: 0 0 0 1px #b9d5bf, 0 2px 0 #a8c3ae; display: flex; align-items: center; padding-left: 16px; font-size: 19px; color: #5d625f; }
.search svg { width: 23px; height: 23px; }
.search span { margin: -2px 0 0 16px; }
.pinned { display: flex; gap: 30px; margin: 16px 0 0 20px; }
.pinned svg { width: 36px; height: 36px; }
.pinned svg:nth-child(3) { margin: 0 1px 0 -1px; }
.tile { box-sizing: border-box; width: 56px; height: 56px; margin: 6px 0 0 20px; border-radius: 6px; background: #e5f3e6; box-shadow: 0 0 0 1px #c7dec7; position: relative; padding: 10px; }
.tile svg { width: 36px; height: 36px; }
.badge { position: absolute; right: 2px; top: 3px; width: 23px; height: 23px; border-radius: 50%; background: #78909c; color: #dfe7ea; text-align: center; font: 700 14px/23px "Open Sans", sans-serif; }
.mark { position: absolute; left: 16px; bottom: -1px; width: 24px; height: 5px; border-radius: 3px; background: #0078d4; }
.tray { display: flex; margin-left: auto; margin-right: 29px; fill: none; stroke: #161a18; stroke-width: 1.600; }
.caret { width: 17px; height: 10px; margin-top: 29px; }
.wifi { width: 24px; height: 18px; margin: 24px 0 0 29px; }
.vol { width: 24px; height: 18px; margin: 25px 0 0 11px; }
.batt { width: 24px; height: 16px; margin: 26px 0 0 13px; }
.clock { padding-top: 10px; width: 101px; margin-left: 24px; align-items: flex-end; font-size: 17px; stroke: none; }
</style>
